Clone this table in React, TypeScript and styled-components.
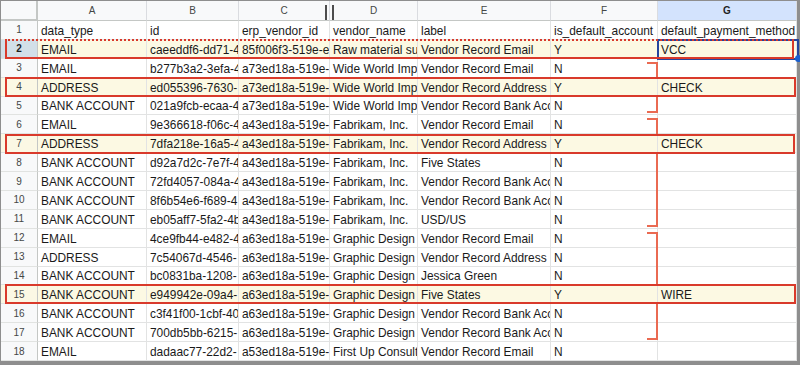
import React from 'react'
import styled, { createGlobalStyle } from 'styled-components'

const GlobalStyle = createGlobalStyle`
  html, body {
    margin: 0;
    padding: 0;
    background: #fff;
  }
  body {
    font-family: "Liberation Sans", Arial, sans-serif;
  }
`

const LETTERS = ['A', 'B', 'C', 'D', 'E', 'F', 'G']
const ACTIVE_COL = 'G'
const ACTIVE_ROW = 2
const HIGHLIGHTED = [2, 4, 7, 15]

const ROWS: string[][] = [
  ['data_type', 'id', 'erp_vendor_id', 'vendor_name', 'label', 'is_default_account', 'default_payment_method'],
  ['EMAIL', 'caeeddf6-dd71-4', '85f006f3-519e-e', 'Raw material su', 'Vendor Record Email', 'Y', 'VCC'],
  ['EMAIL', 'b277b3a2-3efa-4', 'a73ed18a-519e-', 'Wide World Imp', 'Vendor Record Email', 'N', ''],
  ['ADDRESS', 'ed055396-7630-', 'a73ed18a-519e-', 'Wide World Imp', 'Vendor Record Address', 'Y', 'CHECK'],
  ['BANK ACCOUNT', '021a9fcb-ecaa-4', 'a73ed18a-519e-', 'Wide World Imp', 'Vendor Record Bank Acc', 'N', ''],
  ['EMAIL', '9e366618-f06c-4', 'a43ed18a-519e-', 'Fabrikam, Inc.', 'Vendor Record Email', 'N', ''],
  ['ADDRESS', '7dfa218e-16a5-4', 'a43ed18a-519e-', 'Fabrikam, Inc.', 'Vendor Record Address', 'Y', 'CHECK'],
  ['BANK ACCOUNT', 'd92a7d2c-7e7f-4', 'a43ed18a-519e-', 'Fabrikam, Inc.', 'Five States', 'N', ''],
  ['BANK ACCOUNT', '72fd4057-084a-4', 'a43ed18a-519e-', 'Fabrikam, Inc.', 'Vendor Record Bank Acc', 'N', ''],
  ['BANK ACCOUNT', '8f6b54e6-f689-4', 'a43ed18a-519e-', 'Fabrikam, Inc.', 'Vendor Record Bank Acc', 'N', ''],
  ['BANK ACCOUNT', 'eb05aff7-5fa2-4b', 'a43ed18a-519e-', 'Fabrikam, Inc.', 'USD/US', 'N', ''],
  ['EMAIL', '4ce9fb44-e482-4', 'a63ed18a-519e-', 'Graphic Design', 'Vendor Record Email', 'N', ''],
  ['ADDRESS', '7c54067d-4546-', 'a63ed18a-519e-', 'Graphic Design', 'Vendor Record Address', 'N', ''],
  ['BANK ACCOUNT', 'bc0831ba-1208-', 'a63ed18a-519e-', 'Graphic Design', 'Jessica Green', 'N', ''],
  ['BANK ACCOUNT', 'e949942e-09a4-', 'a63ed18a-519e-', 'Graphic Design', 'Five States', 'Y', 'WIRE'],
  ['BANK ACCOUNT', 'c3f41f00-1cbf-40', 'a63ed18a-519e-', 'Graphic Design', 'Vendor Record Bank Acc', 'N', ''],
  ['BANK ACCOUNT', '700db5bb-6215-', 'a63ed18a-519e-', 'Graphic Design', 'Vendor Record Bank Acc', 'N', ''],
  ['EMAIL', 'dadaac77-22d2-', 'a53ed18a-519e-', 'First Up Consult', 'Vendor Record Email', 'N', ''],
]

// red review boxes drawn over whole rows (page coords)
const BOXES = [
  { top: 39, width: 789, dottedTop: true },
  { top: 77, width: 791 },
  { top: 134, width: 790 },
  { top: 284, width: 791 },
]

// vendor group brackets along the F/G border
const BRACKETS: { top: number; height: number; side: 'top' | 'bottom' }[] = [
  { top: 62, height: 15, side: 'top' },
  { top: 97, height: 16, side: 'bottom' },
  { top: 118, height: 16, side: 'top' },
  { top: 154, height: 73, side: 'bottom' },
  { top: 232, height: 52, side: 'top' },
  { top: 304, height: 36, side: 'bottom' },
]

const App = () => {
  return (
    <>
      <GlobalStyle />
      <Frame>
        <Sheet>
          <Corner />
          {LETTERS.map((l) => (
            <ColHead key={l} $active={l === ACTIVE_COL}>
              {l}
              {l === 'C' && <FreezeGrip />}
            </ColHead>
          ))}
          {ROWS.map((cells, i) => {
            const n = i + 1
            const hl = HIGHLIGHTED.includes(n)
            return (
              <React.Fragment key={n}>
                <RowHead $selected={n === ACTIVE_ROW} $hl={hl}>
                  {n}
                </RowHead>
                {cells.map((c, j) => (
                  <Cell key={j} $hl={hl}>
                    {c}
                  </Cell>
                ))}
              </React.Fragment>
            )
          })}
        </Sheet>

        <Selection />
        <FillHandle />
        {BOXES.map((b) => (
          <RowBox key={b.top} $dottedTop={b.dottedTop} style={{ top: b.top, width: b.width }} />
        ))}
        {BRACKETS.map((b) => (
          <Bracket key={b.top} $side={b.side} style={{ top: b.top, height: b.height }} />
        ))}
      </Frame>
    </>
  )
}

const Frame = styled.div`
  position: relative;
  width: 800px;
  height: 365px;
  box-sizing: border-box;
  padding: 1px 3px 0 1px;
  background: #8e8e8e;
  overflow: hidden;
`

const Sheet = styled.div`
  display: grid;
  grid-template-columns: 37px 109px 92px 91px 88px 133px 107px 139px;
  grid-template-rows: 20px repeat(18, 18.9px);
  background: #fff;
`

const Corner = styled.div`
  background: #f8f9fa;
  border-right: 2px solid #c4c7c5;
  border-bottom: 2px solid #c4c7c5;
  box-sizing: border-box;
`

const ColHead = styled.div<{ $active?: boolean }>`
  position: relative;
  display: flex;
  align-items: center;
  justify-content: center;
  font-size: 10px;
  color: ${(p) => (p.$active ? '#1f1f1f' : '#444746')};
  font-weight: ${(p) => (p.$active ? 700 : 400)};
  background: ${(p) => (p.$active ? '#d3e3fd' : '#f8f9fa')};
  border-right: 1px solid #dadce0;
  border-bottom: 1px solid #c4c7c5;
`

const FreezeGrip = styled.span`
  position: absolute;
  z-index: 2;
  left: 86px;
  top: 4px;
  width: 9px;
  height: 15px;
  box-sizing: border-box;
  border-left: 2px solid #4d4d4d;
  border-right: 2px solid #4d4d4d;
`

const RowHead = styled.div<{ $selected?: boolean; $hl?: boolean }>`
  display: flex;
  align-items: center;
  justify-content: center;
  font-size: 10px;
  color: ${(p) => (p.$selected ? '#1f1f1f' : '#444746')};
  font-weight: ${(p) => (p.$selected ? 700 : 400)};
  background: ${(p) => (p.$selected ? '#d2dfe8' : p.$hl ? '#fbf8e4' : '#f8f9fa')};
  border-right: 1px solid #c4c7c5;
  border-bottom: 1px solid #e1e3e1;
`

const Cell = styled.div<{ $hl?: boolean }>`
  display: flex;
  align-items: flex-end;
  padding: 0 0 1px 3px;
  font-size: 11.9px;
  color: #1a1a1a;
  white-space: nowrap;
  overflow: hidden;
  background: ${(p) => (p.$hl ? '#fcf9e3' : '#fff')};
  border-right: 1px solid #e2e3e3;
  border-bottom: 1px solid #e2e3e3;
`

const Selection = styled.div`
  position: absolute;
  left: 657px;
  top: 39px;
  width: 142px;
  height: 21px;
  box-sizing: border-box;
  border: 2px solid #24459e;
`

const FillHandle = styled.div`
  position: absolute;
  left: 795px;
  top: 55px;
  width: 7px;
  height: 7px;
  border-radius: 50%;
  background: #1a5fd0;
`

const RowBox = styled.div<{ $dottedTop?: boolean }>`
  position: absolute;
  left: 5px;
  height: 20px;
  box-sizing: border-box;
  border: 2px solid #d93a2b;
  border-top-style: ${(p) => (p.$dottedTop ? 'dotted' : 'solid')};
`

const Bracket = styled.div<{ $side: 'top' | 'bottom' }>`
  position: absolute;
  left: 647px;
  width: 11px;
  box-sizing: border-box;
  border-right: 2px solid #ea6a52;
  border-${(p) => p.$side}: 2px solid #ea6a52;
`

export default App
